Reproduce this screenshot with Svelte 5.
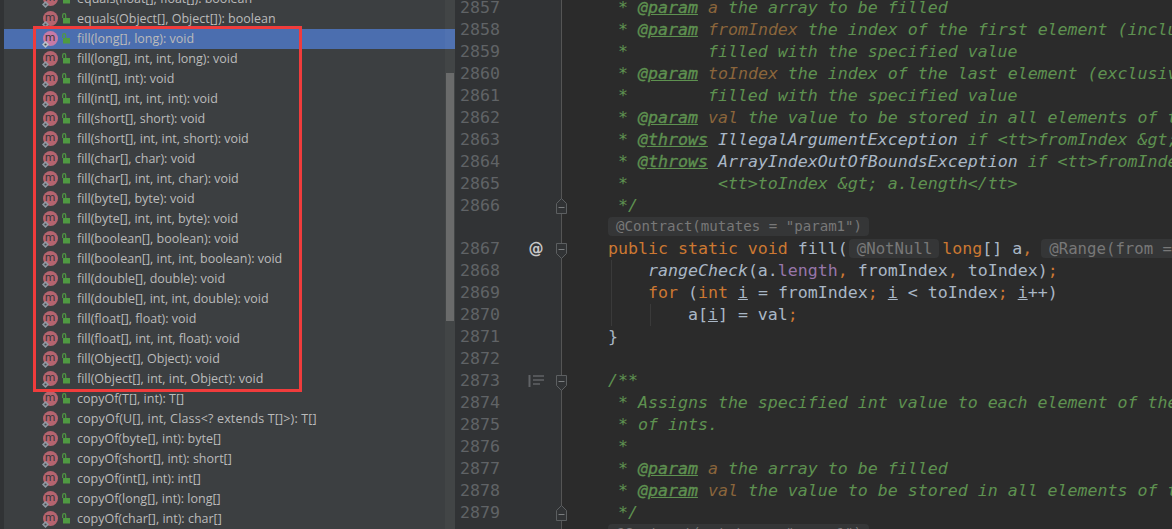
<script>
  const methods = [
    'equals(float[], float[]): boolean','equals(Object[], Object[]): boolean',
    'fill(long[], long): void','fill(long[], int, int, long): void','fill(int[], int): void','fill(int[], int, int, int): void',
    'fill(short[], short): void','fill(short[], int, int, short): void','fill(char[], char): void','fill(char[], int, int, char): void',
    'fill(byte[], byte): void','fill(byte[], int, int, byte): void','fill(boolean[], boolean): void','fill(boolean[], int, int, boolean): void',
    'fill(double[], double): void','fill(double[], int, int, double): void','fill(float[], float): void','fill(float[], int, int, float): void',
    'fill(Object[], Object): void','fill(Object[], int, int, Object): void',
    'copyOf(T[], int): T[]','copyOf(U[], int, Class<? extends T[]>): T[]','copyOf(byte[], int): byte[]','copyOf(short[], int): short[]',
    'copyOf(int[], int): int[]','copyOf(long[], int): long[]','copyOf(char[], int): char[]'
  ];

  const c = (t) => ['c', t];
  const tag = (t) => ['t', t];
  const par = (t) => ['p', t];
  const k = (t) => ['k', t];
  const d = (t) => ['d', t];
  const cls = (t) => ['r', t];
  const lines = [
    { n: 2857, s: [c(' * '), tag('@param'), c(' '), par('a'), c(' the array to be filled')] },
    { n: 2858, s: [c(' * '), tag('@param'), c(' '), par('fromIndex'), c(' the index of the first element (inclusive) to be')] },
    { n: 2859, s: [c(' *        filled with the specified value')] },
    { n: 2860, s: [c(' * '), tag('@param'), c(' '), par('toIndex'), c(' the index of the last element (exclusive) to be')] },
    { n: 2861, s: [c(' *        filled with the specified value')] },
    { n: 2862, s: [c(' * '), tag('@param'), c(' '), par('val'), c(' the value to be stored in all elements of the array')] },
    { n: 2863, s: [c(' * '), tag('@throws'), c(' '), cls('IllegalArgumentException'), c(' if <tt>fromIndex &gt; toIndex</tt>')] },
    { n: 2864, s: [c(' * '), tag('@throws'), c(' '), cls('ArrayIndexOutOfBoundsException'), c(' if <tt>fromIndex &lt; 0</tt>')] },
    { n: 2865, s: [c(' *         <tt>toIndex &gt; a.length</tt>')] },
    { n: 2866, s: [c(' */')], fold: 'up' },
    { inlay: '@Contract(mutates = "param1")' },
    { n: 2867, icon: 'at', fold: 'down', s: [k('public static void '), d('fill('), ['h', '@NotNull'], k('long'), d('[] a'), k(','), ['h2', '@Range(from = 0, to = 1)']] },
    { n: 2868, g: [3], s: [d('    '), ['i', 'rangeCheck'], d('(a.'), ['f', 'length'], k(','), d(' fromIndex'), k(','), d(' toIndex)'), k(';')] },
    { n: 2869, g: [3], s: [k('    for '), d('('), k('int '), ['u', 'i'], d(' = fromIndex'), k(';'), d(' '), ['u', 'i'], d(' < toIndex'), k(';'), d(' '), ['u', 'i'], d('++)')] },
    { n: 2870, g: [3, 42], s: [d('        a['), ['u', 'i'], d('] = val'), k(';')] },
    { n: 2871, s: [d('}')] },
    { n: 2872, s: [] },
    { n: 2873, icon: 'doc', fold: 'down', s: [c('/**')] },
    { n: 2874, s: [c(' * Assigns the specified int value to each element of the specified array')] },
    { n: 2875, s: [c(' * of ints.')] },
    { n: 2876, s: [c(' *')] },
    { n: 2877, s: [c(' * '), tag('@param'), c(' '), par('a'), c(' the array to be filled')] },
    { n: 2878, s: [c(' * '), tag('@param'), c(' '), par('val'), c(' the value to be stored in all elements of the array')] },
    { n: 2879, s: [c(' */')], fold: 'up' },
    { inlay: '@Contract(mutates = "param1")' }
  ];
</script>

<div class="ide">
  <aside class="structure">
    <ul class="list">
      {#each methods as m, i}
        <li class="row" class:sel={i === 2}>
          <span class="badge">
            <span class="circle">m</span>
            <svg class="gear" viewBox="0 0 7 7" width="7" height="7"><path d="M3.5 0L7 3.5 3.5 7 0 3.5z" fill="currentColor"/><circle cx="3.5" cy="3.5" r="1.1" fill="#4a4d50"/></svg>
          </span>
          <svg class="lock" viewBox="0 0 8 11" width="8" height="11"><path d="M.7 5V2.2A1.5 1.5 0 0 1 3.7 2.2V5" fill="none" stroke="currentColor" stroke-width="1.2"/><rect x="1" y="5" width="7" height="5.5" fill="currentColor"/></svg>
          <span class="sig" class:wide={m.includes('Class')}>{m}</span>
        </li>
      {/each}
    </ul>
    <div class="track"><div class="thumb"></div></div>
    <div class="redbox"></div>
  </aside>

  <section class="editor">
    {#each lines as l}
      {#if l.inlay}
        <div class="line inlayrow">
          <div class="gutter"></div>
          <div class="code"><span class="hint block">{l.inlay}</span></div>
        </div>
      {:else}
        <div class="line">
          <div class="gutter">
            <span class="num">{l.n}</span>
            <span class="mark">
              {#if l.icon === 'at'}<span class="at">@</span>{/if}
              {#if l.icon === 'doc'}
                <svg viewBox="0 0 16 14" width="16" height="14"><path d="M1.5 1v12" stroke="#606366" stroke-width="2"/><path d="M5 2h11M5 6h11M5 10h7" stroke="#606366" stroke-width="1.6"/></svg>
              {/if}
            </span>
            {#if l.fold}
              <svg class="fold {l.fold}" viewBox="0 0 11 16" width="11" height="16">
                {#if l.fold === 'up'}
                  <path d="M.5 15.5V5.5L5.5 .5l5 5v10z" fill="#313335" stroke="#5c5f61"/>
                {:else}
                  <path d="M.5 .5v10l5 5 5-5V.5z" fill="#313335" stroke="#5c5f61"/>
                {/if}
                <path d={l.fold === 'up' ? 'M2.5 9.5h6' : 'M2.5 6.5h6'} stroke="#7a7d7f"/>
              </svg>
            {/if}
          </div>
          <div class="code">{#each l.g ?? [] as g}<i class="guide" style="left:{g}px"></i>{/each}{#each l.s as [kind, text]}<span class={kind}>{text}</span>{/each}</div>
        </div>
      {/if}
    {/each}
  </section>
</div>

<style>
  :global(body) { margin: 0; background: #2b2b2b; }
  .ide { display: flex; width: 1172px; height: 529px; overflow: hidden; }

  .structure { position: relative; flex: 0 0 451px; border-left: 4px solid #313335; background: #3c3f41; overflow: hidden; }
  .list { list-style: none; margin: -11px 0 0; padding: 0; }
  .row { display: flex; align-items: center; height: 20px; color: #bbbbbb; font: 12.5px "Open Sans", sans-serif; white-space: nowrap; }
  .row.sel { background: #4b6eaf; }
  .badge { position: relative; width: 15px; height: 15px; margin: -1px 0 0 38.5px; }
  .circle { display: block; width: 15px; height: 15px; border-radius: 50%; background: #b5646f; color: #37373a; font: 11px/14px "DejaVu Sans", sans-serif; text-align: center; }
  .gear { position: absolute; left: -0.5px; top: 9.5px; color: #8f9aa3; }
  .lock { margin: -2px 0 0 4.5px; color: #4f9a42; }
  .sig { margin: -1px 0 0 7px; }
  .sig.wide { letter-spacing: 0.15px; }
  .sel .circle { background: #c87aa6; }
  .sel .gear { color: #b9c2cc; }

  .track { position: absolute; top: 0; right: 0; width: 10px; height: 529px; background: rgba(255, 255, 255, 0.03); }
  .thumb { width: 8px; height: 248px; margin: 73px 0 0 1px; background: #6a6b6b; }
  .redbox { position: absolute; left: 29px; top: 26px; width: 263px; height: 360px; border: 3px solid #f03c3c; }

  .editor { flex: 1; margin-top: -3px; font: 16.6px "DejaVu Sans Mono", monospace; min-width: 0; }
  .line { display: flex; height: 22px; line-height: 22px; white-space: pre; }
  .inlayrow { height: 21px; }
  .gutter { position: relative; display: flex; flex: 0 0 106px; border-right: 1px solid #555555; background: #313335; }
  .num { width: 45px; text-align: right; color: #606366; }
  .mark { display: flex; align-items: center; justify-content: center; width: 16px; margin-left: 28px; }
  .at { color: #c8c8c8; font: bold 15px "DejaVu Sans", sans-serif; }
  .fold { position: absolute; right: -6px; z-index: 1; }
  .fold.up { top: 3px; }
  .fold.down { top: 5px; }
  .code { position: relative; flex: 1; padding-left: 46px; background: #2b2b2b; color: #a9b7c6; overflow: hidden; }
  .guide { position: absolute; top: 0; bottom: 0; margin-left: 46px; width: 1px; background: #3a3a3a; }

  .c { color: #5e9150; font-style: italic; }
  .t { color: #5e9150; font-style: italic; text-decoration: underline; -webkit-text-stroke: 0.35px #5e9150; }
  .p { color: #8a653b; font-style: italic; }
  .r { color: #a9b7c6; font-style: italic; }
  .k { color: #cc7832; }
  .d { color: #a9b7c6; }
  .i { color: #a9b7c6; font-style: italic; }
  .f { color: #9876aa; }
  .u { color: #a9b7c6; text-decoration: underline; }
  .h, .h2, .hint { color: #787878; background: #353637; border-radius: 4px; }
  .h { display: inline-block; height: 19px; line-height: 19px; padding: 0 7px 0 8px; margin: 1px 3px 0 1px; font-size: 15.7px; vertical-align: top; }
  .h2 { display: inline-block; height: 19px; line-height: 19px; padding: 0 8px; margin: 1px 0 0 9px; font-size: 15.7px; vertical-align: top; }
  .block { display: inline-block; height: 19px; line-height: 19px; padding: 0 7px 0 8px; font-size: 14.1px; vertical-align: top; }
</style>
